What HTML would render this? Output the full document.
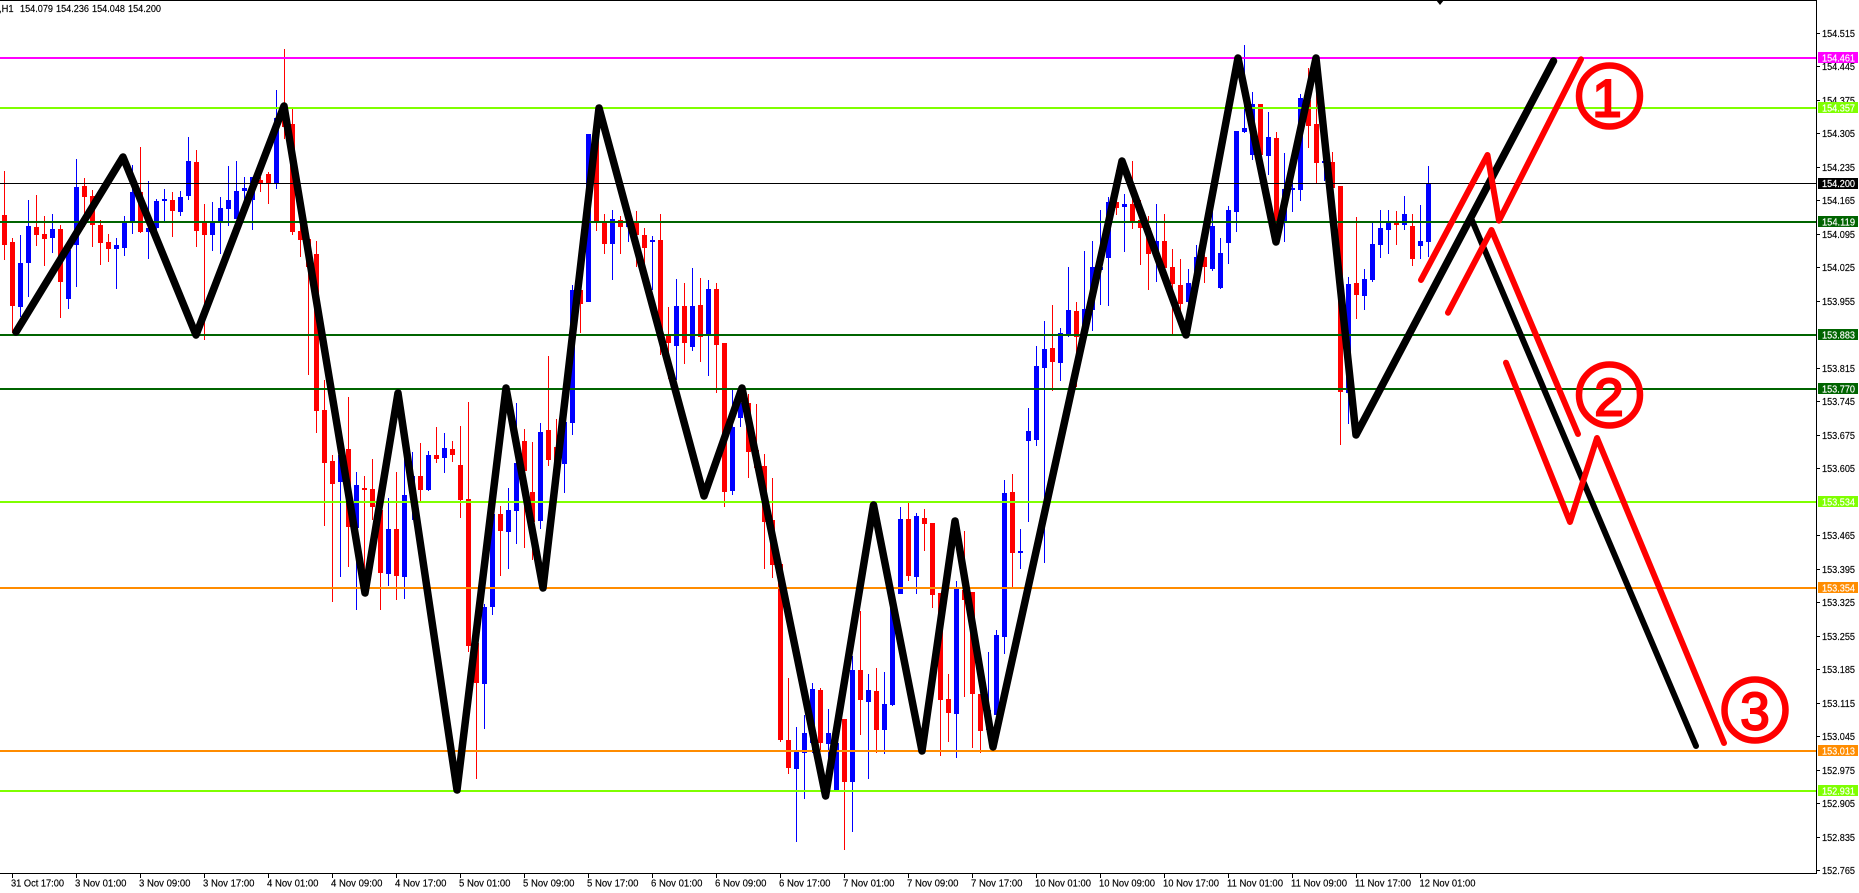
<!DOCTYPE html>
<html><head><meta charset="utf-8"><title>H1 chart</title>
<style>
html,body{margin:0;padding:0;background:#fff;width:1859px;height:893px;overflow:hidden}
svg{display:block}
text{font-family:"Liberation Sans",sans-serif;font-size:10px}
.t text{stroke:currentColor;stroke-width:.15px}
</style></head><body>
<svg width="1859" height="893" viewBox="0 0 1859 893" xmlns="http://www.w3.org/2000/svg">
<rect width="1859" height="893" fill="#fff"/>
<g fill="none" shape-rendering="crispEdges">
<path stroke="#f00" stroke-width="1" d="M4.5 171V260M12.5 238V333M36.5 195V246M44.5 216V266M60.5 225V318M84.5 178V227M92.5 190V247M100.5 220V265M108.5 234V262M140.5 147V233M172.5 192V237M196.5 150V247M204.5 204V340M260.5 177V192M268.5 172V204M284.5 49V139M292.5 109V235M300.5 225V257M308.5 239V375M316.5 241V433M324.5 380V526M332.5 455V602M348.5 397V567M364.5 476V570M372.5 459V520M380.5 503V610M396.5 472V600M420.5 443V501M436.5 427V463M452.5 441V462M460.5 426V518M468.5 402V652M476.5 643V779M500.5 506V576M524.5 429V548M532.5 442V560M548.5 356V466M556.5 419V480M580.5 290V333M596.5 137V231M604.5 214V254M620.5 216V254M636.5 211V267M644.5 228V267M660.5 214V355M668.5 307V379M684.5 283V364M700.5 278V362M716.5 283V393M724.5 343V507M748.5 394V478M756.5 404V468M764.5 454V569M772.5 478V578M780.5 564V742M788.5 678V774M820.5 688V750M844.5 719V850M860.5 611V735M876.5 668V753M908.5 503V581M924.5 509V551M932.5 523V608M940.5 593V756M948.5 674V742M964.5 531V697M972.5 592V748M980.5 694V753M1012.5 474V587M1052.5 305V391M1076.5 302V387M1116.5 170V215M1132.5 161V229M1140.5 200V265M1148.5 216V290M1164.5 214V267M1172.5 249V334M1180.5 259V317M1204.5 255V283M1260.5 104V156M1276.5 132V230M1308.5 68V148M1316.5 60V184M1332.5 152V190M1340.5 186V445M1356.5 217V319M1396.5 211V245M1412.5 214V266"/>
<path stroke="#f00" stroke-width="5" d="M4.5 215V245M12.5 242V306M36.5 227V235M44.5 234V239M60.5 229V282M84.5 186V197M92.5 196V225M100.5 225V243M108.5 242V249M140.5 192V232M172.5 200V211M196.5 162V231M204.5 223V235M260.5 180V183M268.5 174V184M284.5 105V127M292.5 124V232M300.5 231V240M308.5 239V267M316.5 254V411M324.5 410V463M332.5 461V484M348.5 449V527M364.5 488V490M372.5 489V507M380.5 510V573M396.5 529V576M420.5 476V490M436.5 455V459M452.5 449V455M460.5 465V500M468.5 499V646M476.5 643V683M500.5 514V531M524.5 441V471M532.5 492V522M548.5 430V460M556.5 447V463M580.5 290V304M596.5 137V221M604.5 223V244M620.5 220V227M636.5 223V235M644.5 235V248M660.5 240V335M668.5 335V343M684.5 306V343M700.5 305V337M716.5 289V345M724.5 343V492M748.5 403V452M756.5 450V468M764.5 466V522M772.5 520V565M780.5 564V740M788.5 740V768M820.5 690V743M844.5 719V782M860.5 670V700M876.5 691V730M908.5 519V576M924.5 518V524M932.5 523V595M940.5 593V700M948.5 699V713M964.5 590V600M972.5 592V694M980.5 694V731M1012.5 492V553M1052.5 348V362M1076.5 311V337M1116.5 202V208M1132.5 204V222M1140.5 220V228M1148.5 228V254M1164.5 241V268M1172.5 267V284M1180.5 285V304M1204.5 257V267M1260.5 104V155M1276.5 138V227M1308.5 100V126M1316.5 124V163M1332.5 162V188M1340.5 186V392M1356.5 283V295M1396.5 223V225M1412.5 226V259"/>
<path stroke="#00f" stroke-width="1" d="M20.5 235V317M28.5 200V297M52.5 214V253M68.5 247V309M76.5 159V287M116.5 238V289M124.5 216V256M132.5 165V234M148.5 181V259M156.5 199V230M164.5 189V221M180.5 191V216M188.5 137V200M212.5 202V251M220.5 197V254M228.5 166V226M236.5 161V219M244.5 177V200M252.5 177V230M276.5 90V189M340.5 445V577M356.5 472V610M388.5 498V586M404.5 457V599M412.5 452V520M428.5 451V491M444.5 433V473M484.5 604V729M492.5 510V615M508.5 488V569M516.5 403V544M540.5 423V529M564.5 422V493M572.5 285V435M588.5 134V302M612.5 210V280M628.5 210V242M652.5 236V290M676.5 279V380M692.5 268V351M708.5 280V376M732.5 390V495M740.5 400V427M796.5 727V842M804.5 715V799M812.5 683V753M828.5 709V790M836.5 720V790M852.5 656V832M868.5 674V779M884.5 672V754M892.5 603V706M900.5 507V594M916.5 513V594M956.5 581V758M988.5 652V740M996.5 630V715M1004.5 480V654M1020.5 529V569M1028.5 408V522M1036.5 346V446M1044.5 321V563M1060.5 328V381M1068.5 267V337M1084.5 251V333M1092.5 241V331M1100.5 210V305M1108.5 197V306M1124.5 194V252M1156.5 204V282M1188.5 269V304M1196.5 245V277M1212.5 207V271M1220.5 238V289M1228.5 206V264M1236.5 131V232M1244.5 45V133M1252.5 92V160M1268.5 112V175M1284.5 153V242M1292.5 180V212M1300.5 94V201M1324.5 123V181M1348.5 277V424M1364.5 269V310M1372.5 223V282M1380.5 210V258M1388.5 210V254M1404.5 196V230M1420.5 205V259M1428.5 166V257"/>
<path stroke="#00f" stroke-width="5" d="M20.5 263V307M28.5 226V263M52.5 229V238M68.5 250V299M76.5 187V245M116.5 245V249M124.5 223V248M132.5 192V221M148.5 228V232M156.5 201V228M164.5 199V201M180.5 197V212M188.5 161V196M212.5 223V235M220.5 208V221M228.5 200V209M236.5 191V219M244.5 188V191M252.5 177V200M276.5 118V184M340.5 455V482M356.5 485V528M388.5 529V574M404.5 495V577M412.5 476V500M428.5 455V490M444.5 448V458M484.5 607V684M492.5 514V607M508.5 510V532M516.5 463V511M540.5 432V521M564.5 422V464M572.5 290V423M588.5 134V302M612.5 219V244M628.5 222V227M652.5 240V242M676.5 306V346M692.5 306V347M708.5 289V335M732.5 427V491M740.5 403V418M796.5 752V769M804.5 733V753M812.5 689V743M828.5 733V744M836.5 743V790M852.5 670V782M868.5 690V702M884.5 704V730M892.5 603V705M900.5 519V594M916.5 516V577M956.5 588V714M988.5 710V730M996.5 635V715M1004.5 493V637M1020.5 551V553M1028.5 431V441M1036.5 366V440M1044.5 349V368M1060.5 333V363M1068.5 310V335M1084.5 309V333M1092.5 267V310M1100.5 267V270M1108.5 202V258M1124.5 204V207M1156.5 241V257M1188.5 283V302M1196.5 257V277M1212.5 226V269M1220.5 253V288M1228.5 210V243M1236.5 131V212M1244.5 128V132M1252.5 104V155M1268.5 137V156M1284.5 189V221M1292.5 188V190M1300.5 98V190M1324.5 161V163M1348.5 284V393M1364.5 279V296M1372.5 244V280M1380.5 228V245M1388.5 223V230M1404.5 214V225M1420.5 241V246M1428.5 183V242"/>
</g>
<g shape-rendering="crispEdges">
<rect x="0" y="57" width="1816" height="2" fill="#f0f"/>
<rect x="0" y="107" width="1816" height="2" fill="#7fff00"/>
<rect x="0" y="183" width="1816" height="1" fill="#000"/>
<rect x="0" y="221" width="1816" height="2" fill="#006400"/>
<rect x="0" y="334" width="1816" height="2" fill="#006400"/>
<rect x="0" y="388" width="1816" height="2" fill="#006400"/>
<rect x="0" y="501" width="1816" height="2" fill="#7fff00"/>
<rect x="0" y="587" width="1816" height="2" fill="#ff8c00"/>
<rect x="0" y="750" width="1816" height="2" fill="#ff8c00"/>
<rect x="0" y="790" width="1816" height="2" fill="#7fff00"/>
</g>
<g fill="none" stroke-linecap="round" stroke-linejoin="round">
<polyline stroke="#000" stroke-width="7.500" points="16,332 123,157 196,335 284,106 365,593 398,393 457,790 506,388 543,588 599,108 704,496 742,388 825.6,796 873.5,505 922,751 955,521 993,747 1122,161 1186,335 1238,58 1276,242 1316,58 1356,435 1553.5,61"/>
<polyline stroke="#000" stroke-width="6" points="1471,218 1696,746"/>
<polyline stroke="#f00" stroke-width="6" points="1421,280 1487.5,155 1499,220.7 1581,59.3"/>
<polyline stroke="#f00" stroke-width="6" points="1448,312.7 1491.5,230 1578,434"/>
<polyline stroke="#f00" stroke-width="6" points="1506,362.7 1570,522 1597,438 1724,743"/>
</g>
<g fill="none" stroke="#f00" stroke-width="6.500">
<circle cx="1609.500" cy="96" r="30.500"/>
<circle cx="1609.500" cy="395" r="30.500"/>
<circle cx="1755" cy="710" r="30.500"/>
</g>
<g fill="#f00" stroke="#f00" stroke-width="2" text-anchor="middle">
<text x="1607" y="116.500" style="font-size:53px">1</text>
<text x="1609" y="415.500" style="font-size:53px">2</text>
<text x="1755" y="729.500" style="font-size:53px">3</text>
</g>
<path d="M1436 0h8l-4 5z" fill="#000"/>
<g shape-rendering="crispEdges" fill="#000">
<rect x="0" y="0" width="1817" height="1"/>
<rect x="1816" y="0" width="1" height="874"/>
<rect x="0" y="873" width="1817" height="1"/>
<path d="M1817 33h3v1h-3zM1817 66h3v1h-3zM1817 100h3v1h-3zM1817 133h3v1h-3zM1817 167h3v1h-3zM1817 200h3v1h-3zM1817 234h3v1h-3zM1817 267h3v1h-3zM1817 301h3v1h-3zM1817 368h3v1h-3zM1817 401h3v1h-3zM1817 435h3v1h-3zM1817 468h3v1h-3zM1817 535h3v1h-3zM1817 569h3v1h-3zM1817 602h3v1h-3zM1817 636h3v1h-3zM1817 669h3v1h-3zM1817 703h3v1h-3zM1817 736h3v1h-3zM1817 770h3v1h-3zM1817 803h3v1h-3zM1817 837h3v1h-3zM1817 870h3v1h-3z"/>
<path d="M12 874h1v4h-1zM76 874h1v4h-1zM140 874h1v4h-1zM204 874h1v4h-1zM268 874h1v4h-1zM332 874h1v4h-1zM396 874h1v4h-1zM460 874h1v4h-1zM524 874h1v4h-1zM588 874h1v4h-1zM652 874h1v4h-1zM716 874h1v4h-1zM780 874h1v4h-1zM844 874h1v4h-1zM908 874h1v4h-1zM972 874h1v4h-1zM1036 874h1v4h-1zM1100 874h1v4h-1zM1164 874h1v4h-1zM1228 874h1v4h-1zM1292 874h1v4h-1zM1356 874h1v4h-1zM1420 874h1v4h-1z"/>
</g>
<g fill="#000" color="#000" class="t">
<text x="1822" y="37" textLength="33" lengthAdjust="spacingAndGlyphs">154.515</text>
<text x="1822" y="70" textLength="33" lengthAdjust="spacingAndGlyphs">154.445</text>
<text x="1822" y="104" textLength="33" lengthAdjust="spacingAndGlyphs">154.375</text>
<text x="1822" y="137" textLength="33" lengthAdjust="spacingAndGlyphs">154.305</text>
<text x="1822" y="171" textLength="33" lengthAdjust="spacingAndGlyphs">154.235</text>
<text x="1822" y="204" textLength="33" lengthAdjust="spacingAndGlyphs">154.165</text>
<text x="1822" y="238" textLength="33" lengthAdjust="spacingAndGlyphs">154.095</text>
<text x="1822" y="271" textLength="33" lengthAdjust="spacingAndGlyphs">154.025</text>
<text x="1822" y="305" textLength="33" lengthAdjust="spacingAndGlyphs">153.955</text>
<text x="1822" y="372" textLength="33" lengthAdjust="spacingAndGlyphs">153.815</text>
<text x="1822" y="405" textLength="33" lengthAdjust="spacingAndGlyphs">153.745</text>
<text x="1822" y="439" textLength="33" lengthAdjust="spacingAndGlyphs">153.675</text>
<text x="1822" y="472" textLength="33" lengthAdjust="spacingAndGlyphs">153.605</text>
<text x="1822" y="539" textLength="33" lengthAdjust="spacingAndGlyphs">153.465</text>
<text x="1822" y="573" textLength="33" lengthAdjust="spacingAndGlyphs">153.395</text>
<text x="1822" y="606" textLength="33" lengthAdjust="spacingAndGlyphs">153.325</text>
<text x="1822" y="640" textLength="33" lengthAdjust="spacingAndGlyphs">153.255</text>
<text x="1822" y="673" textLength="33" lengthAdjust="spacingAndGlyphs">153.185</text>
<text x="1822" y="707" textLength="33" lengthAdjust="spacingAndGlyphs">153.115</text>
<text x="1822" y="740" textLength="33" lengthAdjust="spacingAndGlyphs">153.045</text>
<text x="1822" y="774" textLength="33" lengthAdjust="spacingAndGlyphs">152.975</text>
<text x="1822" y="807" textLength="33" lengthAdjust="spacingAndGlyphs">152.905</text>
<text x="1822" y="841" textLength="33" lengthAdjust="spacingAndGlyphs">152.835</text>
<text x="1822" y="874" textLength="33" lengthAdjust="spacingAndGlyphs">152.765</text>
</g>
<g shape-rendering="crispEdges">
<rect x="1818" y="52" width="40" height="11" fill="#f0f"/>
<rect x="1818" y="102" width="40" height="11" fill="#7fff00"/>
<rect x="1818" y="178" width="40" height="11" fill="#000"/>
<rect x="1818" y="216" width="40" height="11" fill="#006400"/>
<rect x="1818" y="329" width="40" height="11" fill="#006400"/>
<rect x="1818" y="383" width="40" height="11" fill="#006400"/>
<rect x="1818" y="496" width="40" height="11" fill="#7fff00"/>
<rect x="1818" y="582" width="40" height="11" fill="#ff8c00"/>
<rect x="1818" y="745" width="40" height="11" fill="#ff8c00"/>
<rect x="1818" y="785" width="40" height="11" fill="#7fff00"/>
</g>
<g fill="#fff" color="#fff" class="t">
<text x="1822" y="61.500" textLength="33" lengthAdjust="spacingAndGlyphs">154.461</text>
<text x="1822" y="111.500" textLength="33" lengthAdjust="spacingAndGlyphs">154.357</text>
<text x="1822" y="187" textLength="33" lengthAdjust="spacingAndGlyphs">154.200</text>
<text x="1822" y="225.500" textLength="33" lengthAdjust="spacingAndGlyphs">154.119</text>
<text x="1822" y="338.500" textLength="33" lengthAdjust="spacingAndGlyphs">153.883</text>
<text x="1822" y="392.500" textLength="33" lengthAdjust="spacingAndGlyphs">153.770</text>
<text x="1822" y="505.500" textLength="33" lengthAdjust="spacingAndGlyphs">153.534</text>
<text x="1822" y="591.500" textLength="33" lengthAdjust="spacingAndGlyphs">153.354</text>
<text x="1822" y="754.500" textLength="33" lengthAdjust="spacingAndGlyphs">153.013</text>
<text x="1822" y="794.500" textLength="33" lengthAdjust="spacingAndGlyphs">152.931</text>
</g>
<g fill="#000" color="#000" class="t">
<text x="11" y="886.500" textLength="53" lengthAdjust="spacingAndGlyphs">31 Oct 17:00</text>
<text x="75" y="886.500" textLength="51.500" lengthAdjust="spacingAndGlyphs">3 Nov 01:00</text>
<text x="139" y="886.500" textLength="51.500" lengthAdjust="spacingAndGlyphs">3 Nov 09:00</text>
<text x="203" y="886.500" textLength="51.500" lengthAdjust="spacingAndGlyphs">3 Nov 17:00</text>
<text x="267" y="886.500" textLength="51.500" lengthAdjust="spacingAndGlyphs">4 Nov 01:00</text>
<text x="331" y="886.500" textLength="51.500" lengthAdjust="spacingAndGlyphs">4 Nov 09:00</text>
<text x="395" y="886.500" textLength="51.500" lengthAdjust="spacingAndGlyphs">4 Nov 17:00</text>
<text x="459" y="886.500" textLength="51.500" lengthAdjust="spacingAndGlyphs">5 Nov 01:00</text>
<text x="523" y="886.500" textLength="51.500" lengthAdjust="spacingAndGlyphs">5 Nov 09:00</text>
<text x="587" y="886.500" textLength="51.500" lengthAdjust="spacingAndGlyphs">5 Nov 17:00</text>
<text x="651" y="886.500" textLength="51.500" lengthAdjust="spacingAndGlyphs">6 Nov 01:00</text>
<text x="715" y="886.500" textLength="51.500" lengthAdjust="spacingAndGlyphs">6 Nov 09:00</text>
<text x="779" y="886.500" textLength="51.500" lengthAdjust="spacingAndGlyphs">6 Nov 17:00</text>
<text x="843" y="886.500" textLength="51.500" lengthAdjust="spacingAndGlyphs">7 Nov 01:00</text>
<text x="907" y="886.500" textLength="51.500" lengthAdjust="spacingAndGlyphs">7 Nov 09:00</text>
<text x="971" y="886.500" textLength="51.500" lengthAdjust="spacingAndGlyphs">7 Nov 17:00</text>
<text x="1035" y="886.500" textLength="56" lengthAdjust="spacingAndGlyphs">10 Nov 01:00</text>
<text x="1099" y="886.500" textLength="56" lengthAdjust="spacingAndGlyphs">10 Nov 09:00</text>
<text x="1163" y="886.500" textLength="56" lengthAdjust="spacingAndGlyphs">10 Nov 17:00</text>
<text x="1227" y="886.500" textLength="56" lengthAdjust="spacingAndGlyphs">11 Nov 01:00</text>
<text x="1291" y="886.500" textLength="56" lengthAdjust="spacingAndGlyphs">11 Nov 09:00</text>
<text x="1355" y="886.500" textLength="56" lengthAdjust="spacingAndGlyphs">11 Nov 17:00</text>
<text x="1419.500" y="886.500" textLength="56" lengthAdjust="spacingAndGlyphs">12 Nov 01:00</text>
<text x="-1" y="12" textLength="14.500" lengthAdjust="spacingAndGlyphs">,H1</text>
<text x="20" y="12" textLength="33" lengthAdjust="spacingAndGlyphs">154.079</text>
<text x="56" y="12" textLength="33" lengthAdjust="spacingAndGlyphs">154.236</text>
<text x="92" y="12" textLength="33" lengthAdjust="spacingAndGlyphs">154.048</text>
<text x="128" y="12" textLength="33" lengthAdjust="spacingAndGlyphs">154.200</text>
</g>
</svg>
</body></html>
